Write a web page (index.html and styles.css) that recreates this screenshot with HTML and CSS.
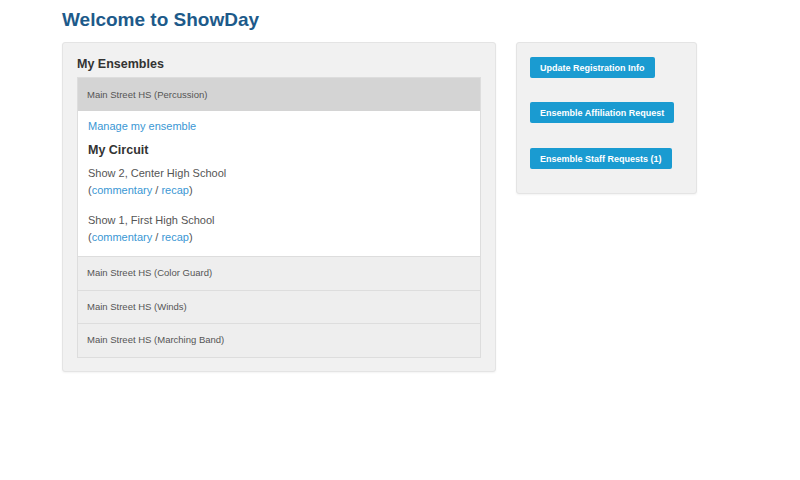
FILE: index.html
```html
<html>
<head>
  <title>ShowDay</title>
  <meta name="viewport" content="width=device-width, initial-scale=1.0">
  <link rel="stylesheet" href="styles.css">
</head>
<body>
  <div class="page">
    <h1>Welcome to ShowDay</h1>
    <div class="layout">
      <div class="panel ensembles">
        <h2>My Ensembles</h2>
        <div class="accordion">
          <div class="item-head open">Main Street HS (Percussion)</div>
          <div class="item-body">
            <a class="link" href="#">Manage my ensemble</a>
            <h3>My Circuit</h3>
            <div class="show">
              Show 2, Center High School<br>
              (<a class="link" href="#">commentary</a> / <a class="link" href="#">recap</a>)
            </div>
            <div class="show">
              Show 1, First High School<br>
              (<a class="link" href="#">commentary</a> / <a class="link" href="#">recap</a>)
            </div>
          </div>
          <div class="item-head">Main Street HS (Color Guard)</div>
          <div class="item-head">Main Street HS (Winds)</div>
          <div class="item-head">Main Street HS (Marching Band)</div>
        </div>
      </div>
      <div class="panel actions">
        <button class="btn">Update Registration Info</button>
        <button class="btn">Ensemble Affiliation Request</button>
        <button class="btn">Ensemble Staff Requests (1)</button>
      </div>
    </div>
  </div>
</body>
</html>
```

FILE: styles.css
```css
body {
  margin: 0;
  background-color: #ffffff;
  font-family: 'Liberation Sans', Arial, sans-serif;
  color: #333333;
}
.page {
  padding: 9px 0 0 62px;
}
h1 {
  margin: 0 0 12px;
  font-size: 19px;
  line-height: 21px;
  font-weight: bold;
  color: #1d5a8a;
}
.layout {
  display: flex;
  align-items: flex-start;
  gap: 20px;
}
.panel {
  background-color: #f1f1f1;
  border: 1px solid #e4e4e4;
  border-radius: 3px;
  box-shadow: 0 1px 2px rgba(0, 0, 0, 0.05);
}
.ensembles {
  width: 404px;
  padding: 13px 14px 13px 14px;
}
h2 {
  margin: 0 0 5px;
  font-size: 12.5px;
  line-height: 16px;
  color: #333333;
}
.accordion {
  border: 1px solid #dddddd;
}
.item-head {
  height: 32.5px;
  line-height: 32.5px;
  padding-left: 9px;
  font-size: 9.5px;
  color: #555555;
  background-color: #eeeeee;
  border-top: 1px solid #dddddd;
}
.item-head.open {
  height: 33px;
  line-height: 33px;
  background-color: #d4d4d4;
  border-top: none;
}
.item-body {
  background-color: #ffffff;
  padding: 7px 10px 10px;
  font-size: 11px;
  line-height: 17px;
  color: #555555;
}
.link {
  color: #3a97d4;
  text-decoration: none;
}
h3 {
  margin: 7px 0 7px;
  font-size: 12.5px;
  line-height: 16px;
  color: #333333;
}
.show {
  margin-bottom: 13px;
}
.show:last-child {
  margin-bottom: 0;
}
.actions {
  width: 153px;
  padding: 14px 13px 0;
  display: flex;
  flex-direction: column;
  align-items: flex-start;
}
.btn {
  height: 21px;
  margin-bottom: 24px;
  padding: 0 10px;
  border: none;
  border-radius: 2px;
  background-color: #1a9bd1;
  color: #ffffff;
  font-family: 'Liberation Sans', Arial, sans-serif;
  font-size: 9px;
  font-weight: bold;
  cursor: pointer;
}
.btn:nth-child(3) {
  margin-top: 1px;
}
```
